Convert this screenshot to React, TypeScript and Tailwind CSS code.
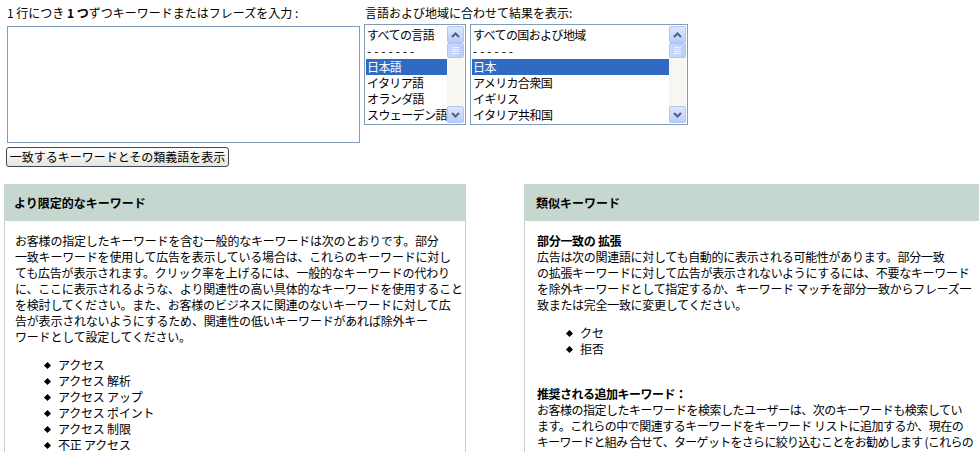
import React from 'react';

const font = { fontFamily: '"Noto Sans CJK JP", "Liberation Sans", sans-serif' };

const ScrollBar = () => (
  <div className="flex flex-col w-[17px] h-full bg-[#f7f6f0] shrink-0">
    <div className="h-[17px] w-[17px] rounded-[2px] border border-[#b3c6f2] bg-gradient-to-b from-[#dde7fd] to-[#b9cdfb] flex items-center justify-center">
      <svg width="9" height="6" viewBox="0 0 9 6">
        <path d="M1 5 L4.5 1.5 L8 5" stroke="#4d6185" strokeWidth="2" fill="none" />
      </svg>
    </div>
    <div className="h-[15px] w-[17px] rounded-[2px] border border-[#b3c6f2] bg-gradient-to-r from-[#c9d8fc] to-[#bccffb] flex flex-col items-center justify-center gap-[1px]">
      <div className="w-[7px] h-[1px] bg-[#eef3fe]" />
      <div className="w-[7px] h-[1px] bg-[#eef3fe]" />
      <div className="w-[7px] h-[1px] bg-[#eef3fe]" />
      <div className="w-[7px] h-[1px] bg-[#eef3fe]" />
    </div>
    <div className="flex-1" />
    <div className="h-[17px] w-[17px] rounded-[2px] border border-[#b3c6f2] bg-gradient-to-b from-[#dde7fd] to-[#b9cdfb] flex items-center justify-center">
      <svg width="9" height="6" viewBox="0 0 9 6">
        <path d="M1 1 L4.5 4.5 L8 1" stroke="#4d6185" strokeWidth="2" fill="none" />
      </svg>
    </div>
  </div>
);

const ListBox = ({ items, selected, width }: { items: string[]; selected: number; width: string }) => (
  <div className={`${width} h-[101px] border border-[#7f9db9] bg-white flex p-[1px]`}>
    <div className="flex-1 pt-[1px] overflow-hidden tracking-[-0.6px]">
      {items.map((it, i) => (
        <div
          key={i}
          className={`h-[16px] leading-[16px] pl-[1px] whitespace-nowrap ${
            i === selected ? 'bg-[#316ac5] text-white' : 'text-black'
          } ${it.startsWith('-') ? 'tracking-[3px]' : ''}`}
        >
          {it}
        </div>
      ))}
    </div>
    <ScrollBar />
  </div>
);

const Bullet = ({ children }: { children: React.ReactNode }) => (
  <li className="flex items-center h-[16px]">
    <span className="w-[5px] h-[5px] bg-black rotate-45 mr-[8px]" />
    {children}
  </li>
);

const PanelHeader = ({ title, px }: { title: string; px: string }) => (
  <div className={`h-[37px] bg-[#c6d7cf] flex items-center ${px} font-bold text-[12px]`}>{title}</div>
);

export default function App() {
  return (
    <div className="w-[979px] h-[452px] overflow-hidden bg-white text-black text-[12px] leading-[16px]" style={font}>
      <div className="flex pt-[4px]">
        <div className="pl-[7px] w-[364px] shrink-0">
          <div className="h-[18px] leading-[18px]">
            1 行につき <b>1 つ</b>ずつキーワードまたはフレーズを入力 :
          </div>
          <div className="mt-[4px] w-[353px] h-[117px] border border-[#7f9db9] bg-white" />
        </div>
        <div>
          <div className="h-[18px] leading-[18px] pl-[1px]">言語および地域に合わせて結果を表示:</div>
          <div className="flex gap-[4px] mt-[2px]">
            <ListBox
              width="w-[102px]"
              selected={2}
              items={['すべての言語', '-------', '日本語', 'イタリア語', 'オランダ語', 'スウェーデン語']}
            />
            <ListBox
              width="w-[218px]"
              selected={2}
              items={['すべての国および地域', '------', '日本', 'アメリカ合衆国', 'イギリス', 'イタリア共和国']}
            />
          </div>
        </div>
      </div>

      <div className="pl-[6px] mt-[4px]">
        <button className="h-[20px] w-[223px] rounded-[3px] border border-[#3c4a5c] bg-gradient-to-b from-white to-[#e6e5dd] text-[12px] leading-[16px] text-black">
          一致するキーワードとその類義語を表示
        </button>
      </div>

      <div className="flex mt-[17px] gap-[58px] pl-[4px]">
        <div className="w-[462px] shrink-0">
          <PanelHeader title="より限定的なキーワード" px="pl-[10px]" />
          <div className="border-x border-[#cfcfcf] h-[300px] pl-[10px] pt-[12px] whitespace-nowrap tracking-[-0.2px]">
            <p>
              お客様の指定したキーワードを含む一般的なキーワードは次のとおりです。部分<br />
              一致キーワードを使用して広告を表示している場合は、これらのキーワードに対し<br />
              ても広告が表示されます。クリック率を上げるには、一般的なキーワードの代わり<br />
              に、ここに表示されるような、より関連性の高い具体的なキーワードを使用すること<br />
              を検討してください。また、お客様のビジネスに関連のないキーワードに対して広<br />
              告が表示されないようにするため、関連性の低いキーワードがあれば除外キー<br />
              ワードとして設定してください。
            </p>
            <ul className="mt-[12px] pl-[30px]">
              <Bullet>アクセス</Bullet>
              <Bullet>アクセス 解析</Bullet>
              <Bullet>アクセス アップ</Bullet>
              <Bullet>アクセス ポイント</Bullet>
              <Bullet>アクセス 制限</Bullet>
              <Bullet>不正 アクセス</Bullet>
            </ul>
          </div>
        </div>

        <div className="w-[470px] shrink-0">
          <PanelHeader title="類似キーワード" px="pl-[12px]" />
          <div className="border-l border-[#cfcfcf] h-[300px] pl-[12px] pt-[12px] whitespace-nowrap">
            <p className="tracking-[-0.3px]">
              <b>部分一致の 拡張</b>
              <br />
              広告は次の関連語に対しても自動的に表示される可能性があります。部分一致<br />
              の拡張キーワードに対して広告が表示されないようにするには、不要なキーワード<br />
              を除外キーワードとして指定するか、キーワード マッチを部分一致からフレーズ一<br />
              致または完全一致に変更してください。
            </p>
            <ul className="mt-[12px] pl-[30px]">
              <Bullet>クセ</Bullet>
              <Bullet>拒否</Bullet>
            </ul>
            <p className="mt-[29px] tracking-[-0.5px]">
              <b>推奨される追加キーワード：</b>
              <br />
              お客様の指定したキーワードを検索したユーザーは、次のキーワードも検索してい<br />
              ます。これらの中で関連するキーワードをキーワード リストに追加するか、現在の<br />
              <span className="tracking-[-0.7px]">キーワードと組み 合せて、ターゲットをさらに絞り込むことをお勧めします (これらの</span>
            </p>
          </div>
        </div>
      </div>
    </div>
  );
}
